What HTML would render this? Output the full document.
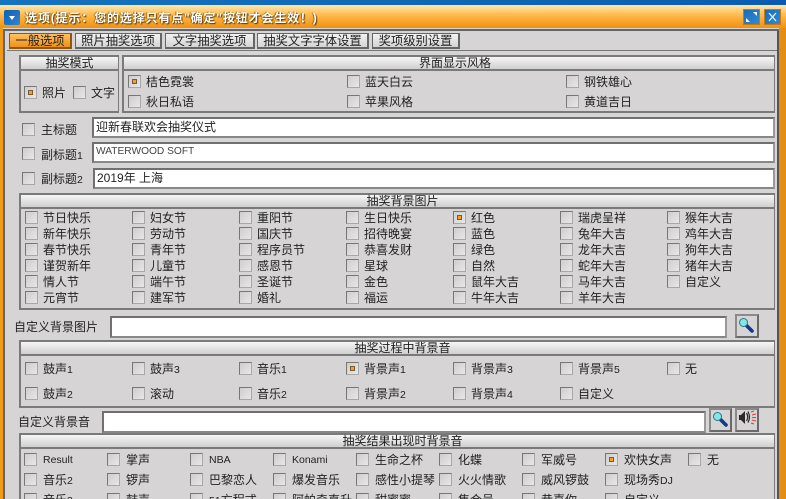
<!DOCTYPE html>
<html lang="zh"><head><meta charset="utf-8"><title>选项</title>
<style>
html,body{margin:0;padding:0;width:786px;height:499px;overflow:hidden;background:#d6d4d4}
body{position:relative;font:12px/16px "Liberation Sans","Noto Sans CJK SC",sans-serif;color:#222}
div,b,i,u,svg{position:absolute;display:block}
b{font-weight:400;white-space:nowrap;height:16px;margin-top:1px}
i{width:11px;height:11px;border:1px solid #777;border-right-color:#a8a8a8;border-bottom-color:#a8a8a8;background:linear-gradient(135deg,#cfcdcd,#e8e6e6)}
i.k::after{content:"";position:absolute;left:3px;top:3px;width:3px;height:3px;background:#f0a030;border:1px solid #7a5a30}
.g{border-style:solid;border-width:2px 1px 2px 2px;box-sizing:border-box;border-color:#7a7a7a}
.h{background:linear-gradient(#f6f6f6,#cfcfcf);border-bottom:2px solid #7a7a7a;box-sizing:border-box;text-align:center;height:14px;line-height:13px;left:0;right:0;top:0}
.p{padding-left:10px}
.t{box-sizing:border-box;height:16px;top:33px;border:1px solid #666;border-right:2px solid #666;border-bottom:2px solid #666;background:linear-gradient(#f2f2f2,#d4d4d4);text-align:center;line-height:14px;font-size:12.3px;white-space:nowrap}
.f{background:#fff;box-sizing:border-box;border:2px solid #707070;border-right-color:#999;border-bottom-color:#888;padding:0 2px;line-height:15px;white-space:nowrap;overflow:hidden}
.s{box-sizing:border-box;border:2px solid #8a8a8a;border-right-color:#6a6a6a;border-bottom-color:#6a6a6a;background:#d6d4d4}
.w{box-sizing:border-box;width:17px;height:16px;top:9px;background:linear-gradient(135deg,#1a6cb8,#2d8ad8);border:1px solid #c87a10}
.n{font-size:10.5px}
</style></head><body>
<div style="left:0;top:0;width:786px;height:5px;background:linear-gradient(90deg,#1673bd,#0b5cb0)"></div>
<div style="left:0;top:5px;width:786px;height:23px;background:linear-gradient(#ffe8b0,#ffb84a 45%,#f09010)"></div>
<div style="left:0;top:28px;width:3px;height:471px;background:#f09a18"></div>
<div style="left:779px;top:28px;width:7px;height:471px;background:#e58c12"></div>
<div style="left:3px;top:28px;width:776px;height:3px;background:#d6d4d4"></div>
<div style="left:3px;top:29px;width:2px;height:470px;background:#666"></div>
<div style="left:777px;top:29px;width:2px;height:470px;background:#555"></div>
<div style="left:3px;top:29px;width:776px;height:2px;background:#666"></div>
<div style="left:4px;top:10px;width:16px;height:15px;background:linear-gradient(135deg,#0f60ae,#2c86d6);border-radius:2px"></div>
<div style="left:9px;top:16px;width:0;height:0;border:3px solid transparent;border-top:4px solid #fff;border-bottom:0"></div>
<div style="left:25px;top:10px;height:16px;line-height:16px;color:#fff;font-weight:700;font-size:12px;letter-spacing:.85px;white-space:nowrap;text-shadow:1px 1px 1px #5a3a00,-1px 0 1px #9a6000">选项(提示：您的选择只有点"确定"按钮才会生效！)</div>
<div class="w" style="left:743px"><svg width="15" height="14" viewBox="0 0 15 14"><path d="M2 12h4l-4-4zM13 2H9l4 4z" fill="#fff"/></svg></div>
<div class="w" style="left:764px"><svg width="15" height="14" viewBox="0 0 15 14"><path d="M4 3l7 8M11 3l-7 8" stroke="#e8f4ff" stroke-width="1.3"/></svg></div>

<div class="t" style="left:9px;width:63px;background:linear-gradient(#ffc060,#f09018);border-color:#8a5a10">一般选项</div>
<div class="t" style="left:75px;width:87px">照片抽奖选项</div>
<div class="t" style="left:165px;width:90px">文字抽奖选项</div>
<div class="t" style="left:257px;width:112px">抽奖文字字体设置</div>
<div class="t" style="left:372px;width:88px">奖项级别设置</div>
<div style="left:7px;top:50px;width:770px;height:1px;background:#777"></div>

<div class="g" style="left:19px;top:55px;width:100px;height:58px"><div class="h">抽奖模式</div></div>
<div class="g" style="left:122px;top:55px;width:653px;height:58px"><div class="h" style="padding-left:12px">界面显示风格</div></div>
<i class="k" style="left:24px;top:86px"></i><b style="left:42px;top:84px">照片</b>
<i style="left:73px;top:86px"></i><b style="left:91px;top:84px">文字</b>
<i class="k" style="left:128px;top:75px"></i><b style="left:146px;top:73px">桔色霓裳</b>
<i style="left:347px;top:75px"></i><b style="left:365px;top:73px">蓝天白云</b>
<i style="left:566px;top:75px"></i><b style="left:584px;top:73px">钢铁雄心</b>
<i style="left:128px;top:95px"></i><b style="left:146px;top:93px">秋日私语</b>
<i style="left:347px;top:95px"></i><b style="left:365px;top:93px">苹果风格</b>
<i style="left:566px;top:95px"></i><b style="left:584px;top:93px">黄道吉日</b>

<i style="left:22px;top:123px"></i><b style="left:41px;top:121px">主标题</b>
<div class="f" style="left:92px;top:117px;width:683px;height:21px;padding-top:1px">迎新春联欢会抽奖仪式</div>
<i style="left:22px;top:147px"></i><b style="left:41px;top:146px">副标题<span class="n">1</span></b>
<div class="f" style="left:92px;top:142px;width:683px;height:21px;font-size:10.2px;line-height:14px;color:#444;padding-top:1px">WATERWOOD SOFT</div>
<i style="left:22px;top:172px"></i><b style="left:41px;top:170px">副标题<span class="n">2</span></b>
<div class="f" style="left:93px;top:168px;width:682px;height:21px;line-height:16px">2019年 上海</div>

<div class="g" style="left:19px;top:193px;width:756px;height:117px"><div class="h p">抽奖背景图片</div></div>
<i style="left:25px;top:211px"></i><b style="left:43px;top:209px">节日快乐</b>
<i style="left:132px;top:211px"></i><b style="left:150px;top:209px">妇女节</b>
<i style="left:239px;top:211px"></i><b style="left:257px;top:209px">重阳节</b>
<i style="left:346px;top:211px"></i><b style="left:364px;top:209px">生日快乐</b>
<i class="k" style="left:453px;top:211px"></i><b style="left:471px;top:209px">红色</b>
<i style="left:560px;top:211px"></i><b style="left:578px;top:209px">瑞虎呈祥</b>
<i style="left:667px;top:211px"></i><b style="left:685px;top:209px">猴年大吉</b>
<i style="left:25px;top:227px"></i><b style="left:43px;top:225px">新年快乐</b>
<i style="left:132px;top:227px"></i><b style="left:150px;top:225px">劳动节</b>
<i style="left:239px;top:227px"></i><b style="left:257px;top:225px">国庆节</b>
<i style="left:346px;top:227px"></i><b style="left:364px;top:225px">招待晚宴</b>
<i style="left:453px;top:227px"></i><b style="left:471px;top:225px">蓝色</b>
<i style="left:560px;top:227px"></i><b style="left:578px;top:225px">兔年大吉</b>
<i style="left:667px;top:227px"></i><b style="left:685px;top:225px">鸡年大吉</b>
<i style="left:25px;top:243px"></i><b style="left:43px;top:241px">春节快乐</b>
<i style="left:132px;top:243px"></i><b style="left:150px;top:241px">青年节</b>
<i style="left:239px;top:243px"></i><b style="left:257px;top:241px">程序员节</b>
<i style="left:346px;top:243px"></i><b style="left:364px;top:241px">恭喜发财</b>
<i style="left:453px;top:243px"></i><b style="left:471px;top:241px">绿色</b>
<i style="left:560px;top:243px"></i><b style="left:578px;top:241px">龙年大吉</b>
<i style="left:667px;top:243px"></i><b style="left:685px;top:241px">狗年大吉</b>
<i style="left:25px;top:259px"></i><b style="left:43px;top:257px">谨贺新年</b>
<i style="left:132px;top:259px"></i><b style="left:150px;top:257px">儿童节</b>
<i style="left:239px;top:259px"></i><b style="left:257px;top:257px">感恩节</b>
<i style="left:346px;top:259px"></i><b style="left:364px;top:257px">星球</b>
<i style="left:453px;top:259px"></i><b style="left:471px;top:257px">自然</b>
<i style="left:560px;top:259px"></i><b style="left:578px;top:257px">蛇年大吉</b>
<i style="left:667px;top:259px"></i><b style="left:685px;top:257px">猪年大吉</b>
<i style="left:25px;top:275px"></i><b style="left:43px;top:273px">情人节</b>
<i style="left:132px;top:275px"></i><b style="left:150px;top:273px">端午节</b>
<i style="left:239px;top:275px"></i><b style="left:257px;top:273px">圣诞节</b>
<i style="left:346px;top:275px"></i><b style="left:364px;top:273px">金色</b>
<i style="left:453px;top:275px"></i><b style="left:471px;top:273px">鼠年大吉</b>
<i style="left:560px;top:275px"></i><b style="left:578px;top:273px">马年大吉</b>
<i style="left:667px;top:275px"></i><b style="left:685px;top:273px">自定义</b>
<i style="left:25px;top:291px"></i><b style="left:43px;top:289px">元宵节</b>
<i style="left:132px;top:291px"></i><b style="left:150px;top:289px">建军节</b>
<i style="left:239px;top:291px"></i><b style="left:257px;top:289px">婚礼</b>
<i style="left:346px;top:291px"></i><b style="left:364px;top:289px">福运</b>
<i style="left:453px;top:291px"></i><b style="left:471px;top:289px">牛年大吉</b>
<i style="left:560px;top:291px"></i><b style="left:578px;top:289px">羊年大吉</b>

<b style="left:14px;top:318px">自定义背景图片</b>
<div class="f" style="left:110px;top:316px;width:617px;height:22px"></div>
<div class="s" style="left:735px;top:314px;width:24px;height:24px"><svg width="20" height="20" viewBox="0 0 20 20"><path d="M9 9l6 6" stroke="#123a8a" stroke-width="3.6" stroke-linecap="round"/><circle cx="6.500" cy="6.500" r="4" fill="#7fe8e8" stroke="#2a7a88" stroke-width="1"/></svg></div>

<div class="g" style="left:19px;top:340px;width:756px;height:68px"><div class="h p">抽奖过程中背景音</div></div>
<i style="left:25px;top:362px"></i><b style="left:43px;top:360px">鼓声<span class="n">1</span></b>
<i style="left:132px;top:362px"></i><b style="left:150px;top:360px">鼓声<span class="n">3</span></b>
<i style="left:239px;top:362px"></i><b style="left:257px;top:360px">音乐<span class="n">1</span></b>
<i class="k" style="left:346px;top:362px"></i><b style="left:364px;top:360px">背景声<span class="n">1</span></b>
<i style="left:453px;top:362px"></i><b style="left:471px;top:360px">背景声<span class="n">3</span></b>
<i style="left:560px;top:362px"></i><b style="left:578px;top:360px">背景声<span class="n">5</span></b>
<i style="left:667px;top:362px"></i><b style="left:685px;top:360px">无</b>
<i style="left:25px;top:387px"></i><b style="left:43px;top:385px">鼓声<span class="n">2</span></b>
<i style="left:132px;top:387px"></i><b style="left:150px;top:385px">滚动</b>
<i style="left:239px;top:387px"></i><b style="left:257px;top:385px">音乐<span class="n">2</span></b>
<i style="left:346px;top:387px"></i><b style="left:364px;top:385px">背景声<span class="n">2</span></b>
<i style="left:453px;top:387px"></i><b style="left:471px;top:385px">背景声<span class="n">4</span></b>
<i style="left:560px;top:387px"></i><b style="left:578px;top:385px">自定义</b>

<b style="left:18px;top:413px">自定义背景音</b>
<div class="f" style="left:102px;top:411px;width:604px;height:22px"></div>
<div class="s" style="left:709px;top:408px;width:23px;height:24px"><svg width="19" height="20" viewBox="0 0 19 20"><path d="M9 9l6 6" stroke="#123a8a" stroke-width="3.6" stroke-linecap="round"/><circle cx="6.500" cy="6.500" r="4" fill="#7fe8e8" stroke="#2a7a88" stroke-width="1"/></svg></div>
<div class="s" style="left:735px;top:408px;width:24px;height:24px"><svg width="20" height="20" viewBox="0 0 20 20"><path d="M2 5h2l4-4v13l-4-4H2z" fill="#2a2a2a"/><path d="M9.500 3q2.500 4 0 8M11 1.500q3 5.500 0 11" stroke="#2a2a2a" fill="none" stroke-width="1.200"/><path d="M14 2l3-1M15 5l4-1M15 7.500h4M15 10l4 1M14 13l3 1" stroke="#e83a3a" stroke-width="1"/></svg></div>

<div class="g" style="left:19px;top:433px;width:756px;height:80px"><div class="h p">抽奖结果出现时背景音</div></div>
<i style="left:24px;top:453px"></i><b class="n" style="left:43px;top:451px">Result</b>
<i style="left:107px;top:453px"></i><b style="left:126px;top:451px">掌声</b>
<i style="left:190px;top:453px"></i><b class="n" style="left:209px;top:451px">NBA</b>
<i style="left:273px;top:453px"></i><b class="n" style="left:292px;top:451px">Konami</b>
<i style="left:356px;top:453px"></i><b style="left:375px;top:451px">生命之杯</b>
<i style="left:439px;top:453px"></i><b style="left:458px;top:451px">化蝶</b>
<i style="left:522px;top:453px"></i><b style="left:541px;top:451px">军威号</b>
<i class="k" style="left:605px;top:453px"></i><b style="left:624px;top:451px">欢快女声</b>
<i style="left:688px;top:453px"></i><b style="left:707px;top:451px">无</b>
<i style="left:24px;top:473px"></i><b style="left:43px;top:471px">音乐<span class="n">2</span></b>
<i style="left:107px;top:473px"></i><b style="left:126px;top:471px">锣声</b>
<i style="left:190px;top:473px"></i><b style="left:209px;top:471px">巴黎恋人</b>
<i style="left:273px;top:473px"></i><b style="left:292px;top:471px">爆发音乐</b>
<i style="left:356px;top:473px"></i><b style="left:375px;top:471px">感性小提琴</b>
<i style="left:439px;top:473px"></i><b style="left:458px;top:471px">火火情歌</b>
<i style="left:522px;top:473px"></i><b style="left:541px;top:471px">威风锣鼓</b>
<i style="left:605px;top:473px"></i><b style="left:624px;top:471px">现场秀<span class="n">DJ</span></b>
<i style="left:24px;top:493px"></i><b style="left:43px;top:491px">音乐<span class="n">3</span></b>
<i style="left:107px;top:493px"></i><b style="left:126px;top:491px">鼓声</b>
<i style="left:190px;top:493px"></i><b style="left:209px;top:491px"><span class="n">51</span>方程式</b>
<i style="left:273px;top:493px"></i><b style="left:292px;top:491px">阿帕奇直升</b>
<i style="left:356px;top:493px"></i><b style="left:375px;top:491px">甜蜜蜜</b>
<i style="left:439px;top:493px"></i><b style="left:458px;top:491px">集合号</b>
<i style="left:522px;top:493px"></i><b style="left:541px;top:491px">恭喜你</b>
<i style="left:605px;top:493px"></i><b style="left:624px;top:491px">自定义</b>
</body></html>
